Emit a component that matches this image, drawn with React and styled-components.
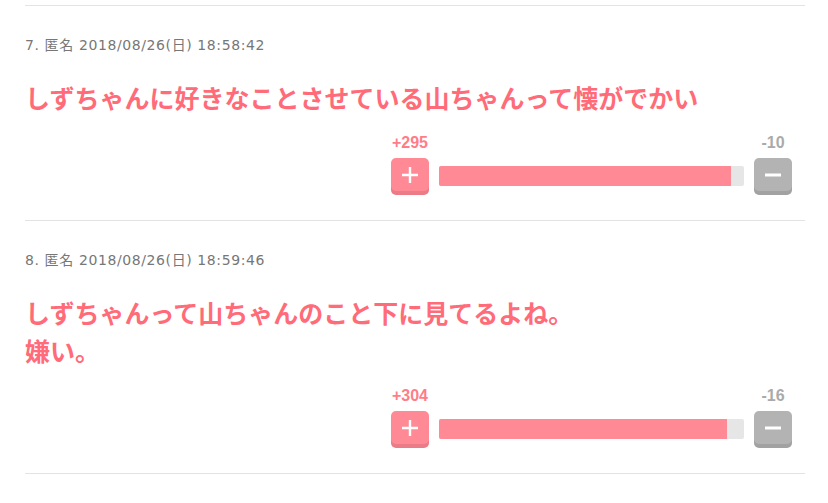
import React from "react";
import styled, { createGlobalStyle } from "styled-components";

const GlobalStyle = createGlobalStyle`
    body {
        margin: 0;
        background: #fff;
        font-family: "Noto Sans", "Noto Sans CJK JP", sans-serif;
    }
`

const comments = [
    {
        no: 7,
        date: "2018/08/26(日) 18:58:42",
        lines: ["しずちゃんに好きなことさせている山ちゃんって懐がでかい"],
        plus: 295,
        minus: 10,
        fill: 95.7,
    },
    {
        no: 8,
        date: "2018/08/26(日) 18:59:46",
        lines: ["しずちゃんって山ちゃんのこと下に見てるよね。", "嫌い。"],
        plus: 304,
        minus: 16,
        fill: 94.3,
    },
]

function Vote({ plus, minus, fill }) {
    return (
        <VoteBox>
            <VoteCol>
                <Count $plus>+{plus}</Count>
                <VoteButton $plus>
                    <svg width="18" height="18" viewBox="0 0 18 18">
                        <path d="M9 1v16M1 9h16" stroke="#fff" strokeWidth="2.4" />
                    </svg>
                </VoteButton>
            </VoteCol>
            <Bar>
                <BarFill style={{ width: fill + "%" }} />
            </Bar>
            <VoteCol>
                <Count>-{minus}</Count>
                <VoteButton>
                    <svg width="18" height="18" viewBox="0 0 18 18">
                        <path d="M1 9h16" stroke="#fff" strokeWidth="3" />
                    </svg>
                </VoteButton>
            </VoteCol>
        </VoteBox>
    )
}

function App() {
    return (
        <Page>
            <GlobalStyle />
            {comments.map((c) => (
                <Comment key={c.no}>
                    <Meta>{c.no}. 匿名 {c.date}</Meta>
                    <Body>
                        {c.lines.map((l) => (
                            <div key={l}>{l}</div>
                        ))}
                    </Body>
                    <Vote plus={c.plus} minus={c.minus} fill={c.fill} />
                </Comment>
            ))}
        </Page>
    )
}

const Page = styled.div`
    width: 780px;
    margin-left: 25px;
    padding-top: 5px;
`

const Comment = styled.div`
    border-top: 1px solid #e3e3e3;
    padding: 29px 0 25px;
    &:last-child {
        border-bottom: 1px solid #e3e3e3;
    }
`

const Meta = styled.div`
    font-family: "DejaVu Sans", "Noto Sans CJK JP", sans-serif;
    font-size: 14px;
    letter-spacing: 0.6px;
    line-height: 20px;
    color: #777;
`

const Body = styled.div`
    margin-top: 23px;
    font-family: "Noto Sans CJK JP", sans-serif;
    font-size: 25px;
    font-weight: 700;
    line-height: 38px;
    color: #ff6b78;
`

const VoteBox = styled.div`
    display: flex;
    align-items: flex-end;
    gap: 10px;
    width: 401px;
    margin: 17px 13px 0 auto;
`

const VoteCol = styled.div`
    display: flex;
    flex-direction: column;
    align-items: center;
    width: 38px;
`

const Count = styled.div`
    font-family: "Liberation Sans", sans-serif;
    font-size: 16px;
    font-weight: 700;
    line-height: 20px;
    margin-bottom: 5px;
    color: ${(p) => (p.$plus ? "#ff7d88" : "#aaa")};
`

const VoteButton = styled.div`
    width: 38px;
    height: 33px;
    border-radius: 5px;
    display: flex;
    align-items: center;
    justify-content: center;
    background: ${(p) => (p.$plus ? "#ff8a96" : "#b3b3b3")};
    box-shadow: 0 4px 0 ${(p) => (p.$plus ? "#ea7b87" : "#a2a2a2")};
    margin-bottom: 4px;
`

const Bar = styled.div`
    flex: 1;
    height: 20px;
    margin-bottom: 9px;
    background: #e6e6e6;
    border-radius: 2px;
    overflow: hidden;
`

const BarFill = styled.div`
    height: 100%;
    background: #ff8a96;
`

export default App
